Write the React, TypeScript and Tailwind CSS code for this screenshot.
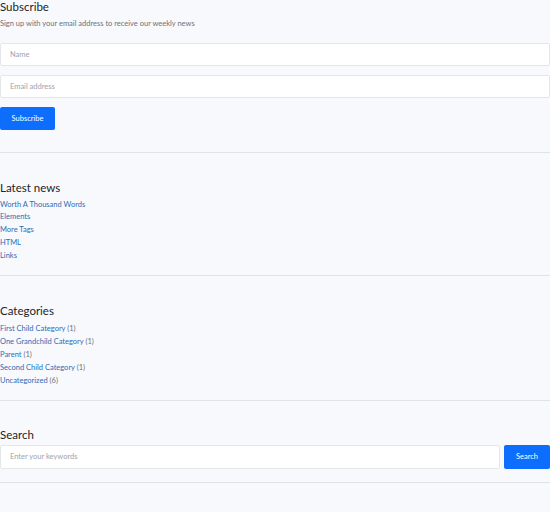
import React from "react";

const latest = ["Worth A Thousand Words", "Elements", "More Tags", "HTML", "Links"];
const categories: [string, number][] = [
  ["First Child Category", 1],
  ["One Grandchild Category", 1],
  ["Parent", 1],
  ["Second Child Category", 1],
  ["Uncategorized", 6],
];

const font = { fontFamily: "Lato, 'Noto Sans', sans-serif" };

function Heading({ children }: { children: React.ReactNode }) {
  return <h3 className="text-[11.5px] leading-[12px] font-normal text-[#1f2328]">{children}</h3>;
}

export default function App() {
  return (
    <div className="min-h-[512px] w-[550px] bg-[#f8f9fc] text-[#1f2328]" style={font}>
      {/* subscribe widget */}
      <section className="border-b border-[#dfe2e6] pt-[1px] pb-[22px]">
        <Heading>Subscribe</Heading>
        <p className="mt-[6px] text-[7.5px] leading-[10px] text-[#6b7280]">
          Sign up with your email address to receive our weekly news
        </p>
        <div className="mt-[14px] flex flex-col gap-[9px]">
          <input
            className="h-[23px] w-full rounded-[2px] border border-[#e3e6ea] bg-white px-[9px] text-[7.5px] placeholder:text-[#9ca3af] outline-none"
            placeholder="Name"
          />
          <input
            className="h-[23px] w-full rounded-[2px] border border-[#e3e6ea] bg-white px-[9px] text-[7.5px] placeholder:text-[#9ca3af] outline-none"
            placeholder="Email address"
          />
          <button className="h-[23px] w-[55px] rounded-[2px] bg-[#0d6efd] text-[7.5px] text-white">
            Subscribe
          </button>
        </div>
      </section>

      {/* latest news */}
      <section className="border-b border-[#dfe2e6] pt-[29px] pb-[12.5px]">
        <Heading>Latest news</Heading>
        <ul className="mt-[4.6px] flex flex-col">
          {latest.map((t) => (
            <li key={t} className="text-[7.5px] leading-[12.75px]">
              <a className="text-[#2d6cb5]">{t}</a>
            </li>
          ))}
        </ul>
      </section>

      {/* categories */}
      <section className="border-b border-[#dfe2e6] pt-[29px] pb-[13px]">
        <Heading>Categories</Heading>
        <ul className="mt-[5px] flex flex-col">
          {categories.map(([t, n]) => (
            <li key={t} className="text-[7.5px] leading-[13px] text-[#6b7280]">
              <a className="text-[#2d6cb5]">{t}</a> ({n})
            </li>
          ))}
        </ul>
      </section>

      {/* search */}
      <section className="border-b border-[#dfe2e6] pt-[28px] pb-[13px]">
        <Heading>Search</Heading>
        <div className="mt-[4px] flex gap-[4px]">
          <input
            className="h-[24px] flex-1 rounded-[2px] border border-[#e3e6ea] bg-white px-[9px] text-[7.5px] placeholder:text-[#9ca3af] outline-none"
            placeholder="Enter your keywords"
          />
          <button className="h-[24px] w-[46px] rounded-[2px] bg-[#0d6efd] text-[7.5px] text-white">
            Search
          </button>
        </div>
      </section>
    </div>
  );
}
